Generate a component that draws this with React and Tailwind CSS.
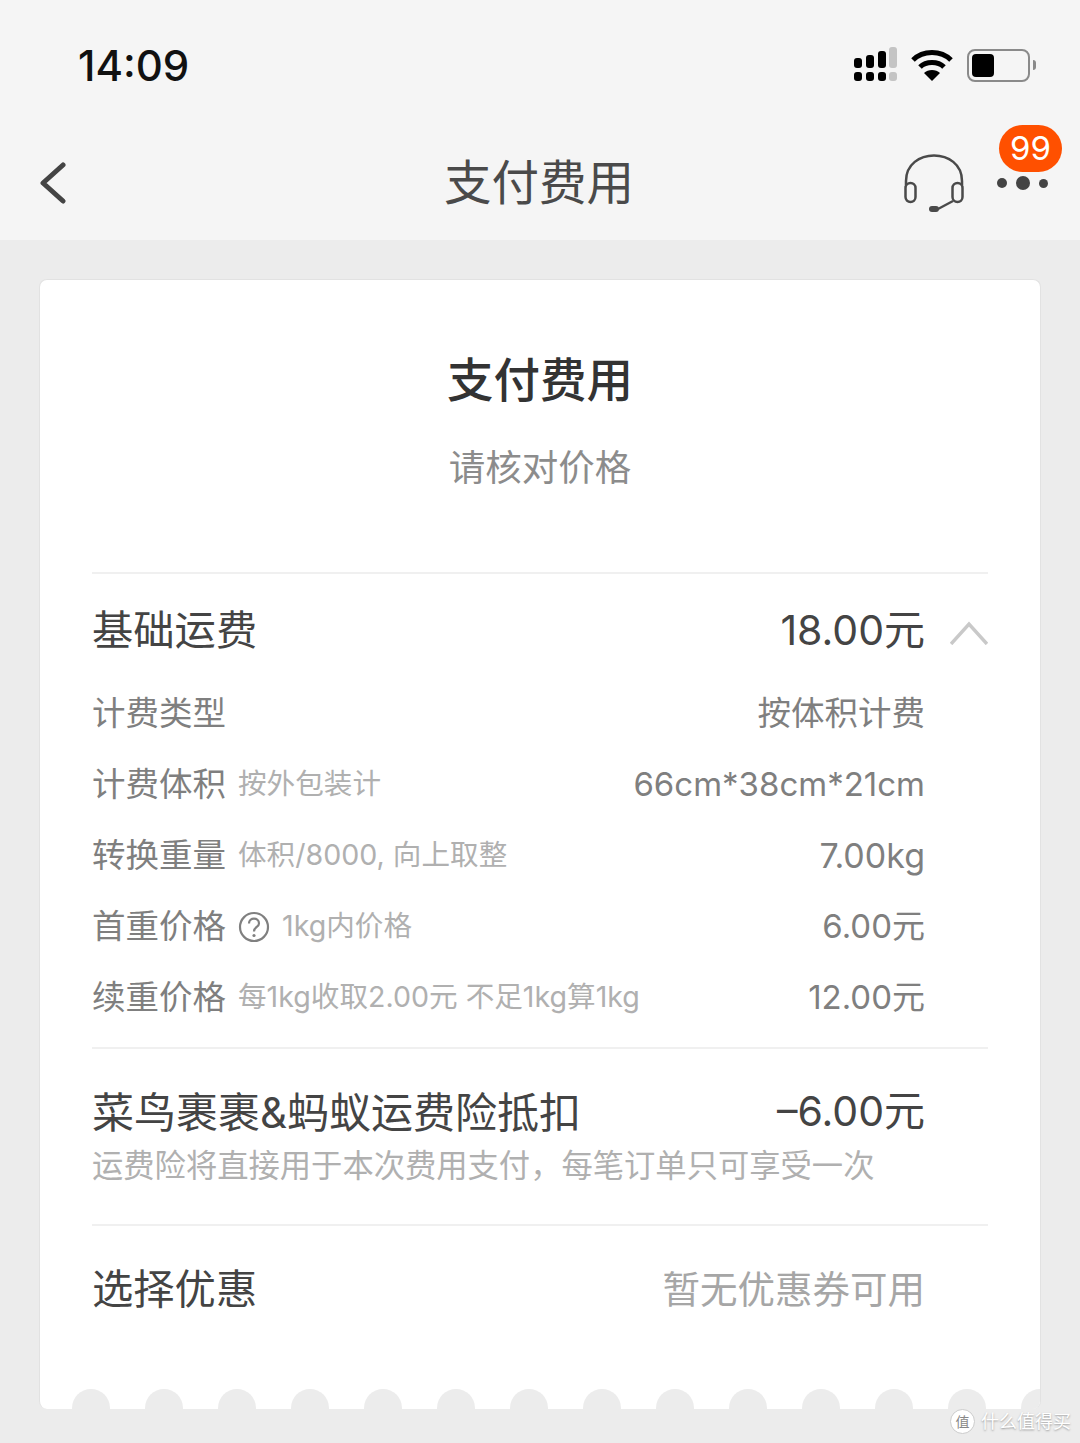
const FONT = "font-['Inter','Noto_Sans_CJK_SC',sans-serif]";

const DETAILS = [
  { label: "计费类型", value: "按体积计费", valueSize: "text-[33.5px]" },
  { label: "计费体积", note: "按外包装计", value: "66cm*38cm*21cm", valueSize: "text-[33px]" },
  { label: "转换重量", note: "体积/8000, 向上取整", value: "7.00kg", valueSize: "text-[34px]" },
  { label: "首重价格", help: true, note: "1kg内价格", value: "6.00元", valueSize: "text-[33px]" },
  { label: "续重价格", note: "每1kg收取2.00元 不足1kg算1kg", value: "12.00元", valueSize: "text-[33px]" },
];

function SignalIcon() {
  return (
    <svg width="44" height="36" viewBox="0 0 44 36">
      <rect x="1" y="11" width="8" height="10" rx="3" fill="#000" />
      <rect x="13" y="8" width="8" height="13" rx="3" fill="#000" />
      <rect x="25" y="4" width="8" height="17" rx="3" fill="#000" />
      <rect x="36" y="0" width="8" height="21" rx="3" fill="#c4c4c4" />
      <rect x="1" y="25" width="8" height="9" rx="3" fill="#000" />
      <rect x="13" y="25" width="8" height="9" rx="3" fill="#000" />
      <rect x="25" y="25" width="8" height="9" rx="3" fill="#000" />
      <rect x="36" y="25" width="8" height="9" rx="3" fill="#c4c4c4" />
    </svg>
  );
}

function WifiIcon() {
  return (
    <svg width="42" height="32" viewBox="0 0 42 32" fill="none" stroke="#000" strokeWidth="5">
      <path d="M2 11 C12 1 30 1 40 11" />
      <path d="M9 18 C15 12 27 12 33 18" />
      <path d="M21 32 L13 24 C17 20 25 20 29 24 Z" fill="#000" stroke="none" />
    </svg>
  );
}

function BatteryIcon() {
  return (
    <div className="flex items-center gap-[3px]">
      <div className="w-[63px] h-[33px] rounded-[8px] border-[2px] border-[#8a8a8a] p-[3px]">
        <div className="w-[22px] h-full rounded-[4px] bg-black" />
      </div>
      <div className="w-[3px] h-[10px] rounded-r-full bg-[#8a8a8a]" />
    </div>
  );
}

function BackIcon() {
  return (
    <svg width="28" height="42" viewBox="0 0 28 42" fill="none" stroke="#444" strokeWidth="5" strokeLinecap="round" strokeLinejoin="round">
      <path d="M24 3 L4 21 L24 39" />
    </svg>
  );
}

function HeadsetIcon() {
  return (
    <svg width="60" height="62" viewBox="0 0 60 62" fill="none" stroke="#4a4a4a" strokeWidth="2.5">
      <path d="M2 32 V28 C2 -6 58 -6 58 28 V32" />
      <rect x="1.5" y="30" width="10" height="19" rx="5" />
      <rect x="48.5" y="30" width="10" height="19" rx="5" />
      <path d="M49 48 L34 56" />
      <rect x="25" y="53" width="10" height="6" rx="3" fill="#4a4a4a" stroke="none" />
    </svg>
  );
}

function CollapseIcon() {
  return (
    <svg width="38" height="24" viewBox="0 0 38 24" fill="none" stroke="#c9c9c9" strokeWidth="3.5">
      <path d="M1 23 L19 3 L37 23" />
    </svg>
  );
}

function HelpIcon() {
  return (
    <svg width="32" height="32" viewBox="0 0 32 32" fill="none" stroke="#808080" strokeWidth="2.2">
      <circle cx="16" cy="16" r="14" />
      <path d="M11 12.5 C11 6 21 6 21 12.5 C21 16 16 16 16 20.5" />
      <circle cx="16" cy="24.5" r="1.6" fill="#808080" stroke="none" />
    </svg>
  );
}

function DetailRow({ label, note, help, value, valueSize }) {
  return (
    <div className="h-[71px] flex items-center justify-between pr-[63px]">
      <div className="flex items-center">
        <span className="text-[33.5px] text-[#7f7f7f]">{label}</span>
        {help && (
          <span className="ml-[12px]">
            <HelpIcon />
          </span>
        )}
        {note && <span className="ml-[12px] text-[28.6px] text-[#b0b0b0]">{note}</span>}
      </div>
      <span className={`${valueSize} text-[#7f7f7f]`}>{value}</span>
    </div>
  );
}

export default function App() {
  const notches = Array.from({ length: 14 });

  return (
    <div className={`${FONT} relative w-[1080px] h-[1443px] overflow-hidden bg-[#ececec]`}>
      {/* Status bar + nav */}
      <div className="h-[240px] bg-[#f5f5f5]">
        <div className="h-[120px] flex items-center justify-between pl-[78px] pr-[44px] pt-[10px]">
          <span className="text-[42px] font-medium text-[#111]">14:09</span>
          <div className="flex items-center gap-[14px]">
            <SignalIcon />
            <WifiIcon />
            <BatteryIcon />
          </div>
        </div>
        <div className="relative h-[120px] flex items-center justify-center">
          <div className="absolute left-[39px] top-[42px]">
            <BackIcon />
          </div>
          <span className="text-[47.5px] text-[#4a4a4a] mt-[5px] -ml-[2px]">支付费用</span>
          <div className="absolute left-[904px] top-[33px]">
            <HeadsetIcon />
          </div>
          <div className="absolute left-[997px] top-[56px] flex items-center gap-[9px]">
            <div className="w-[10px] h-[10px] rounded-full bg-[#444]" />
            <div className="w-[14px] h-[14px] rounded-full bg-[#444]" />
            <div className="w-[9px] h-[9px] rounded-full bg-[#444]" />
          </div>
          <div className="absolute left-[999px] top-[5px] w-[63px] h-[47px] rounded-full bg-[#ff5000] flex items-center justify-center text-[33px] text-white">
            99
          </div>
        </div>
      </div>

      {/* Card */}
      <div className="relative mt-[39px] mx-[39px] h-[1130px] bg-white rounded-[8px] border border-[#e2e2e2] border-b-0 px-[52px] overflow-hidden">
        <div className="h-[292px] flex flex-col items-center">
          <h1 className="mt-[65px] text-[46.5px] leading-[70px] font-medium text-[#333]">支付费用</h1>
          <p className="mt-[28px] text-[36.5px] leading-[50px] text-[#8c8c8c]">请核对价格</p>
        </div>

        <div className="border-t-2 border-[#f0f0f0] h-[475px]">
          <div className="h-[113px] flex items-center justify-between">
            <span className="text-[41.3px] text-[#444]">基础运费</span>
            <div className="flex items-center">
              <span className="text-[41px] text-[#444]">18.00元</span>
              <span className="ml-[25px] mt-[4px]">
                <CollapseIcon />
              </span>
            </div>
          </div>
          <div className="-mt-[9px]">
            {DETAILS.map((d) => (
              <DetailRow key={d.label} {...d} />
            ))}
          </div>
        </div>

        <div className="border-t-2 border-[#f0f0f0] h-[177px] pr-[63px]">
          <div className="mt-[35px] mb-[4px] flex items-center justify-between h-[56px]">
            <span className="text-[42px] text-[#444]">菜鸟裹裹&蚂蚁运费险抵扣</span>
            <span className="text-[41px] text-[#444]">–6.00元</span>
          </div>
          <p className="text-[31.3px] leading-[44px] text-[#b0b0b0] whitespace-nowrap">运费险将直接用于本次费用支付，每笔订单只可享受一次</p>
        </div>

        <div className="border-t-2 border-[#f0f0f0] pr-[63px] h-[130px] flex items-center justify-between">
          <span className="text-[41.3px] text-[#444]">选择优惠</span>
          <span className="text-[37.5px] text-[#a6a6a6]">暂无优惠券可用</span>
        </div>

        {/* Ticket notches */}
        <div className="absolute left-[32px] bottom-0 flex gap-[35px]">
          {notches.map((_, i) => (
            <div key={i} className="w-[38px] h-[20px] shrink-0 rounded-t-full bg-[#ececec]" />
          ))}
        </div>
      </div>

      {/* Watermark */}
      <div className="absolute left-[950px] top-[1408px] flex items-center gap-[6px]">
        <div className="w-[25px] h-[25px] rounded-full bg-white border border-[#ccc] text-[14px] text-[#888] flex items-center justify-center">
          值
        </div>
        <span className="text-[18px] text-white [text-shadow:0_1px_2px_#999]">什么值得买</span>
      </div>
    </div>
  );
}
